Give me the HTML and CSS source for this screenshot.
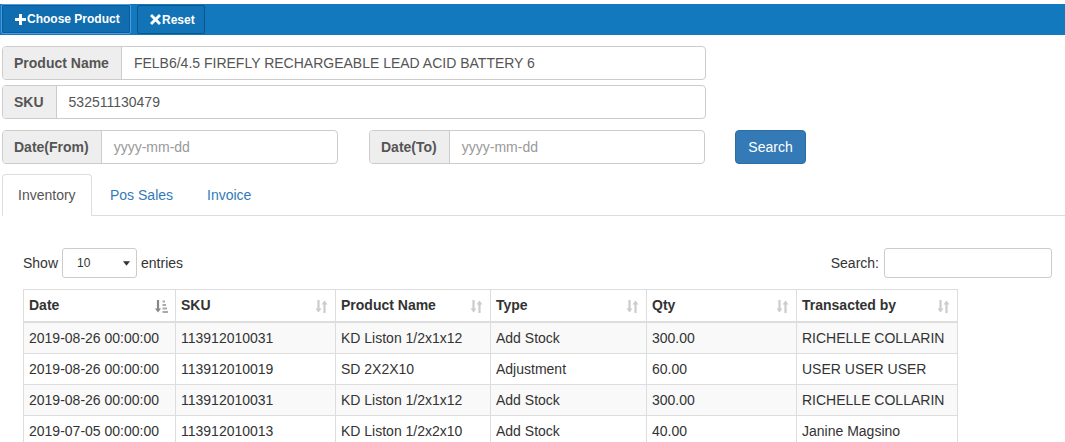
FILE: index.html
```html
<!DOCTYPE html>
<html>
<head>
<meta charset="utf-8">
<link rel="stylesheet" href="styles.css">
</head>
<body>
<div class="topbar">
  <button class="tb-btn tb-choose"><svg class="ic" viewBox="0 0 12 12" width="11" height="11"><path d="M4.4 0h3.2v4.4H12v3.2H7.6V12H4.4V7.6H0V4.4h4.4z" fill="#fff"/></svg>Choose Product</button>
  <button class="tb-btn tb-reset"><svg class="ic" viewBox="0 0 12 12" width="11" height="11"><path d="M2.2 0L6 3.8 9.8 0 12 2.2 8.2 6 12 9.8 9.8 12 6 8.2 2.2 12 0 9.8 3.8 6 0 2.2z" fill="#fff"/></svg>Reset</button>
</div>

<div class="content">
  <div class="igroup w-full">
    <span class="addon">Product Name</span>
    <span class="field">FELB6/4.5 FIREFLY RECHARGEABLE LEAD ACID BATTERY 6</span>
  </div>
  <div class="igroup w-full">
    <span class="addon">SKU</span>
    <span class="field">532511130479</span>
  </div>
  <div class="daterow">
    <div class="igroup w-date">
      <span class="addon">Date(From)</span>
      <span class="field ph">yyyy-mm-dd</span>
    </div>
    <div class="igroup w-date">
      <span class="addon">Date(To)</span>
      <span class="field ph">yyyy-mm-dd</span>
    </div>
    <button class="btn-search">Search</button>
  </div>

  <ul class="tabs">
    <li class="tab active">Inventory</li>
    <li class="tab">Pos Sales</li>
    <li class="tab">Invoice</li>
  </ul>

  <div class="tablearea">
    <div class="dt-top">
      <div class="dt-len">Show <span class="sel">10<svg class="caret" viewBox="0 0 8 5" width="7" height="5"><path d="M0 0h8L4 5z" fill="#333"/></svg></span> entries</div>
      <div class="dt-filter">Search: <span class="sinput"></span></div>
    </div>
    <table class="dt">
      <thead>
        <tr>
          <th class="c1">Date<svg class="sort asc" viewBox="0 0 13 13" width="13" height="13"><path d="M3 0v10" stroke="#888" stroke-width="2.2"/><path d="M0 8.5h6L3 12.5z" fill="#888"/><rect x="7.5" y="0.5" width="2.5" height="2" fill="#aaa"/><rect x="7.5" y="4" width="3.5" height="2" fill="#aaa"/><rect x="7.5" y="7.5" width="4.5" height="2" fill="#aaa"/><rect x="7.5" y="11" width="5.5" height="2" fill="#aaa"/></svg></th>
          <th class="c2">SKU<svg class="sort" viewBox="0 0 13 13" width="13" height="13"><path d="M3.5 0v10" stroke="#ccc" stroke-width="2.2"/><path d="M0.5 8.5h6L3.5 12.5z" fill="#ccc"/><path d="M9.5 13V3" stroke="#ccc" stroke-width="2.2"/><path d="M6.5 4.5h6L9.5 0.5z" fill="#ccc"/></svg></th>
          <th class="c3">Product Name<svg class="sort" viewBox="0 0 13 13" width="13" height="13"><path d="M3.5 0v10" stroke="#ccc" stroke-width="2.2"/><path d="M0.5 8.5h6L3.5 12.5z" fill="#ccc"/><path d="M9.5 13V3" stroke="#ccc" stroke-width="2.2"/><path d="M6.5 4.5h6L9.5 0.5z" fill="#ccc"/></svg></th>
          <th class="c4">Type<svg class="sort" viewBox="0 0 13 13" width="13" height="13"><path d="M3.5 0v10" stroke="#ccc" stroke-width="2.2"/><path d="M0.5 8.5h6L3.5 12.5z" fill="#ccc"/><path d="M9.5 13V3" stroke="#ccc" stroke-width="2.2"/><path d="M6.5 4.5h6L9.5 0.5z" fill="#ccc"/></svg></th>
          <th class="c5">Qty<svg class="sort" viewBox="0 0 13 13" width="13" height="13"><path d="M3.5 0v10" stroke="#ccc" stroke-width="2.2"/><path d="M0.5 8.5h6L3.5 12.5z" fill="#ccc"/><path d="M9.5 13V3" stroke="#ccc" stroke-width="2.2"/><path d="M6.5 4.5h6L9.5 0.5z" fill="#ccc"/></svg></th>
          <th class="c6">Transacted by<svg class="sort" viewBox="0 0 13 13" width="13" height="13"><path d="M3.5 0v10" stroke="#ccc" stroke-width="2.2"/><path d="M0.5 8.5h6L3.5 12.5z" fill="#ccc"/><path d="M9.5 13V3" stroke="#ccc" stroke-width="2.2"/><path d="M6.5 4.5h6L9.5 0.5z" fill="#ccc"/></svg></th>
        </tr>
      </thead>
      <tbody>
        <tr><td>2019-08-26 00:00:00</td><td>113912010031</td><td>KD Liston 1/2x1x12</td><td>Add Stock</td><td>300.00</td><td>RICHELLE COLLARIN</td></tr>
        <tr><td>2019-08-26 00:00:00</td><td>113912010019</td><td>SD 2X2X10</td><td>Adjustment</td><td>60.00</td><td>USER USER USER</td></tr>
        <tr><td>2019-08-26 00:00:00</td><td>113912010031</td><td>KD Liston 1/2x1x12</td><td>Add Stock</td><td>300.00</td><td>RICHELLE COLLARIN</td></tr>
        <tr><td>2019-07-05 00:00:00</td><td>113912010013</td><td>KD Liston 1/2x2x10</td><td>Add Stock</td><td>40.00</td><td>Janine Magsino</td></tr>
      </tbody>
    </table>
  </div>
</div>
</body>
</html>
```

FILE: styles.css
```css
* { box-sizing: border-box; }
html, body { margin: 0; padding: 0; background: #fff; }
body {
  font-family: "Liberation Sans", Arial, sans-serif;
  font-size: 14px;
  line-height: 20px;
  color: #333;
  overflow: hidden;
}
.topbar {
  margin-top: 4px;
  height: 31px;
  background: #1279be;
  display: flex;
  gap: 6px;
  padding-left: 1px;
}
.tb-btn {
  height: 30px;
  font-family: "Liberation Sans", Arial, sans-serif;
  font-weight: bold;
  font-size: 12px;
  color: #fff;
  border-radius: 2px;
  display: flex;
  align-items: center;
  justify-content: flex-start;
  white-space: nowrap;
  padding: 0 0 0 13px;
  cursor: pointer;
}
.tb-btn .ic { margin-right: 1px; flex-shrink: 0; }
.tb-choose {
  width: 130px;
  background: #0f6db0;
  border: 1px solid #4d9be6;
  box-shadow: inset 0 0 0 1px #0b5d98;
}
.tb-reset {
  width: 68px;
  margin-top: 1px;
  height: 29px;
  background: #1273b6;
  border: 1px solid #0b558a;
  padding-left: 12px;
}
.content { padding: 11px 0 0 2px; }
.igroup {
  display: flex;
  height: 34px;
  border: 1px solid #ccc;
  border-radius: 4px;
  overflow: hidden;
  margin-bottom: 5px;
}
.w-full { width: 704px; }
.w-date { width: 336px; }
.addon {
  background: #eee;
  border-right: 1px solid #ccc;
  color: #555;
  font-weight: bold;
  padding: 6px 12px 6px 11px;
  white-space: nowrap;
}
.field {
  flex: 1;
  padding: 6px 12px;
  color: #555;
  white-space: nowrap;
}
.field.ph { color: #999; }
.daterow {
  display: flex;
  margin-top: 11px;
  align-items: flex-start;
}
.daterow .igroup { margin-right: 31px; }
.daterow .igroup + .igroup { margin-right: 30px; }
.btn-search {
  height: 34px;
  width: 71px;
  background: #337ab7;
  border: 1px solid #2e6da4;
  border-radius: 4px;
  color: #fff;
  font-family: "Liberation Sans", Arial, sans-serif;
  font-size: 14px;
  padding: 0;
}
.tabs {
  list-style: none;
  margin: 5px 0 0 0;
  padding: 0;
  display: flex;
  border-bottom: 1px solid #ddd;
  height: 42px;
}
.tab {
  padding: 10px 15px 11px;
  color: #337ab7;
  border: 1px solid transparent;
  border-radius: 4px 4px 0 0;
  margin-right: 2px;
}
.tab.active {
  color: #555;
  background: #fff;
  border-color: #ddd;
  border-bottom-color: #fff;
  height: 42px;
  width: 90px;
}
.tablearea { padding: 32px 13px 0 21px; }
.dt-top {
  display: flex;
  justify-content: space-between;
  align-items: center;
  height: 30px;
}
.dt-len, .dt-filter { display: flex; align-items: center; }
.sel {
  display: inline-flex;
  align-items: center;
  justify-content: space-between;
  width: 75px;
  height: 30px;
  border: 1px solid #ccc;
  border-radius: 3px;
  margin: 0 4px 0 4px;
  padding: 0 6px 0 14px;
  font-size: 12px;
}
.sinput {
  display: inline-block;
  width: 168px;
  height: 30px;
  border: 1px solid #ccc;
  border-radius: 3px;
  margin-left: 5px;
}
table.dt {
  border-collapse: collapse;
  margin-top: 11px;
  table-layout: fixed;
  width: 935px;
}
.dt th, .dt td {
  border: 1px solid #ddd;
  padding: 5px 5px;
  text-align: left;
  white-space: nowrap;
  height: 31px;
}
.dt th {
  font-weight: bold;
  position: relative;
  border-bottom: 2px solid #ddd;
  padding-right: 24px;
  height: 32px;
}
.dt tbody tr:nth-child(odd) { background: #f9f9f9; }
.sort {
  position: absolute;
  right: 7px;
  top: 10px;
}
.c1 { width: 152px; }
.c2 { width: 160px; }
.c3 { width: 155px; }
.c4 { width: 156px; }
.c5 { width: 150px; }
.c6 { width: 161px; }
```
